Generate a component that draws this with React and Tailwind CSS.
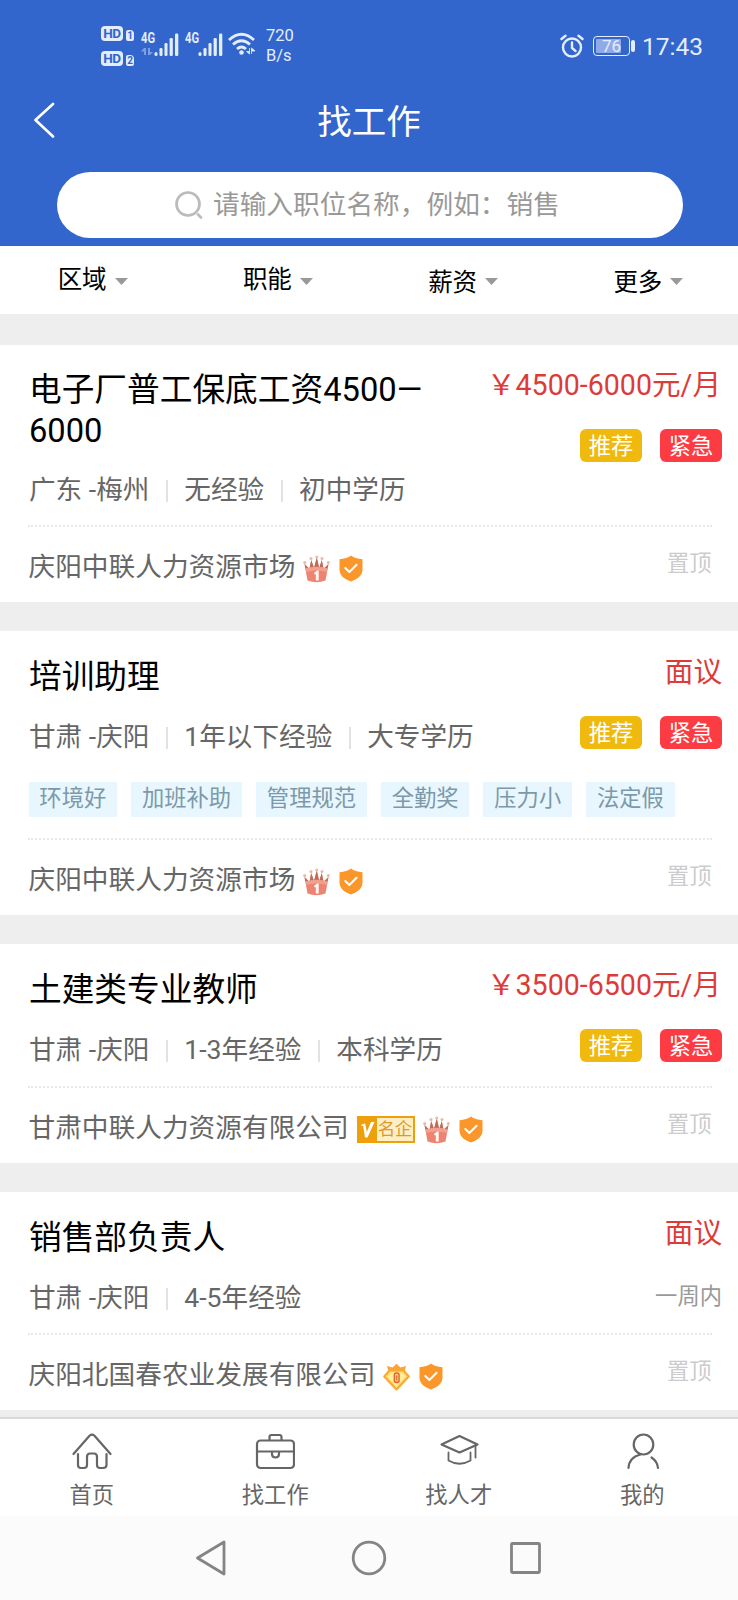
import React from "react";

const SignalBars = () => (
  <svg width="25" height="24" viewBox="0 0 25 24" fill="#e4edff">
    <rect x="0.5" y="19" width="3" height="4" rx="1.5" />
    <rect x="5.5" y="15" width="3" height="8" rx="1.2" />
    <rect x="10.5" y="10" width="3" height="13" rx="1.2" />
    <rect x="15.6" y="5" width="3.2" height="18" rx="1.2" />
    <rect x="21" y="0.5" width="3.3" height="22.5" rx="1.2" />
  </svg>
);

const NetLabel = () => (
  <span className="block w-[17px] origin-left scale-x-[0.8] text-[14px] leading-[13px] font-bold">4G</span>
);

const HdBadge = ({ n }) => (
  <div className="flex h-[15px] items-end gap-[3px]">
    <span className="flex h-[15px] w-[22px] items-center justify-center rounded-[4px] bg-[#e4edff] text-[13.5px] leading-none font-bold tracking-tight text-[#3266cc]">
      HD
    </span>
    <span className="flex h-[11px] w-[8px] items-center justify-center rounded-[2px] rounded-tr-[4px] bg-[#e4edff] text-[10px] leading-none font-bold text-[#3266cc]">
      {n}
    </span>
  </div>
);

const Crown = () => (
  <svg width="27" height="28" viewBox="0 0 27 28">
    <path d="M1.5 9 L4.5 25.5 Q13.5 28.8 22.5 25.5 L25.5 9 L20.5 14 L18.8 5 L16.2 13 L13.8 2.5 L11 13 L8.2 5 L6.5 14 Z" fill="#ee8371" />
    <path d="M1.5 9 L6.5 14 L8.2 5 L11 13 L13.8 2.5 L16.2 13 L18.8 5 L20.5 14 L25.5 9 L24.6 13.5 Q13.5 10.5 2.4 13.5 Z" fill="#c06a58" />
    <path d="M2.4 13.5 Q13.5 10 24.6 13.5 L23.9 17 Q13.5 14 3.1 17 Z" fill="#f0a08e" />
    <g fill="#e6b9ac">
      <circle cx="1.7" cy="7.5" r="1.5" />
      <circle cx="8" cy="3.6" r="1.5" />
      <circle cx="13.8" cy="2" r="1.5" />
      <circle cx="19" cy="3.6" r="1.5" />
      <circle cx="25.3" cy="7.5" r="1.5" />
    </g>
    <path d="M11.2 17.8 L14.2 15.6 H15.7 V25.5 H12.8 V19.2 H11.2 Z" fill="#fff6f2" />
  </svg>
);

const Shield = () => (
  <svg width="24" height="27" viewBox="0 0 24 27">
    <path d="M12 0.5 C14.8 2.8 18.6 3.8 23.5 4.2 V14.5 C23.5 20.5 18.5 24.3 12 26.5 C5.5 24.3 0.5 20.5 0.5 14.5 V4.2 C5.4 3.8 9.2 2.8 12 0.5 Z" fill="#fb972a" />
    <path d="M6.3 13 L10.4 17 L17.6 9.8" fill="none" stroke="#fff" strokeWidth="2" strokeLinecap="round" strokeLinejoin="round" />
  </svg>
);

const Gem = () => (
  <svg width="27" height="28" viewBox="0 0 27 28">
    <path d="M5.5 9 L4 3 L9.5 4.5 L13.5 0.8 L17.5 4.5 L23 3 L21.5 9 Z" fill="#f9a53a" />
    <path d="M6.5 7.5 H20.5 L25.8 13.5 L13.5 26.5 L1.2 13.5 Z" fill="#fddc6c" stroke="#f9a836" strokeWidth="2" strokeLinejoin="round" />
    <path d="M8 9.5 H19 L22.5 13.5 L13.5 23.5 L4.5 13.5 Z" fill="#ffef9d" />
    <rect x="11.3" y="10" width="4.8" height="9.5" rx="2" fill="#f8c86a" stroke="#e2602e" strokeWidth="1.3" />
    <path d="M13.7 12.5 V17.5" stroke="#e2602e" strokeWidth="0.9" />
  </svg>
);

const Famous = () => (
  <span className="-mr-[1px] flex h-[27px] w-[58px] border-2 border-[#eda00c] bg-[#fdeec4]">
    <span className="flex w-[18px] items-center justify-center bg-[#eda00c]">
      <svg width="14" height="18" viewBox="0 0 14 18">
        <path d="M0.5 3.5 L4.2 2.5 L5.8 11 L10 1 H13.5 L6.5 16.5 H4 L2.2 5 L0.5 5 Z" fill="#fff" />
      </svg>
    </span>
    <span className="flex flex-1 items-center justify-center text-[17.5px] leading-none tracking-[-0.5px] whitespace-nowrap text-[#dd9a2c]">名企</span>
  </span>
);

const icons = { crown: Crown, shield: Shield, gem: Gem, famous: Famous };

const jobs = [
  {
    title: "电子厂普工保底工资4500—6000",
    price: "￥4500-6000元/月",
    meta: ["广东 -梅州", "无经验", "初中学历"],
    hot: true,
    company: "庆阳中联人力资源市场",
    marks: ["crown", "shield"],
    height: "h-[257px] pt-[25px]",
    metaTop: "mt-[18px]",
  },
  {
    title: "培训助理",
    price: "面议",
    meta: ["甘肃 -庆阳", "1年以下经验", "大专学历"],
    hot: true,
    tags: ["环境好", "加班补助", "管理规范", "全勤奖", "压力小", "法定假"],
    company: "庆阳中联人力资源市场",
    marks: ["crown", "shield"],
    height: "h-[284px] pt-[26px]",
    metaTop: "mt-[19px]",
  },
  {
    title: "土建类专业教师",
    price: "￥3500-6500元/月",
    meta: ["甘肃 -庆阳", "1-3年经验", "本科学历"],
    hot: true,
    company: "甘肃中联人力资源有限公司",
    marks: ["famous", "crown", "shield"],
    height: "h-[219px] pt-[26px]",
    metaTop: "mt-[19px]",
  },
  {
    title: "销售部负责人",
    price: "面议",
    meta: ["甘肃 -庆阳", "4-5年经验"],
    time: "一周内",
    company: "庆阳北国春农业发展有限公司",
    marks: ["gem", "shield"],
    height: "h-[218px] pt-[26px]",
    metaTop: "mt-[19px]",
  },
];

function Job({ job }) {
  return (
    <article className={"flex shrink-0 flex-col bg-white " + job.height}>
      <div className="flex flex-1 justify-between pr-4 pl-[29px]">
        <div className="flex flex-col">
          <h2 className="w-[410px] text-[32.7px] leading-[41px] break-all text-black">{job.title}</h2>
          <div className={"flex h-[40px] items-center text-[26.6px] leading-[40px] whitespace-nowrap text-[#666] " + job.metaTop}>
            {job.meta.map((m, i) => (
              <React.Fragment key={m}>
                {i > 0 && <span className="mt-[2px] mr-[16px] ml-[17px] h-[22px] w-[2px] bg-[#e2e2e2]" />}
                <span>{m}</span>
              </React.Fragment>
            ))}
          </div>
          {job.tags && (
            <div className="mt-[25px] -ml-[0.5px] flex gap-[14px] whitespace-nowrap">
              {job.tags.map((t) => (
                <span key={t} className="h-[35px] bg-[#e8f6ff] px-[10.85px] text-[22.3px] leading-[33px] text-[#7c99a8]">
                  {t}
                </span>
              ))}
            </div>
          )}
        </div>
        <div className="flex w-0 flex-col items-end whitespace-nowrap">
          <div className={"-mt-[3px] h-[36px] text-[28.6px] leading-[36px] text-[#dd3b38] " + (job.price === "面议" ? "" : "mr-[1px]")}>{job.price}</div>
          {job.hot ? (
            <div className="mt-[26px] flex gap-[18px] text-[22.3px] leading-[35px] text-white">
              <span className="h-[33px] w-[62px] rounded-[6px] bg-[#f0b90d] text-center">推荐</span>
              <span className="h-[33px] w-[62px] rounded-[6px] bg-[#fc3b42] text-center">紧急</span>
            </div>
          ) : (
            <div className="mt-[29px] text-[22.3px] leading-[32px] text-[#999]">{job.time}</div>
          )}
        </div>
      </div>
      <div className="mr-[26px] ml-[28px] flex h-[77px] shrink-0 items-center justify-between border-t-2 border-dotted border-[#e8e8e8] text-[#666]">
        <div className="flex items-center pt-[4px]">
          <span className="mr-[8px] ml-[0.5px] text-[26.7px] leading-[40px]">{job.company}</span>
          <span className="mt-[4px] flex items-center gap-[9px]">
            {job.marks.map((k) => {
              const Icon = icons[k];
              return <Icon key={k} />;
            })}
          </span>
        </div>
        <span className="-mt-[3px] mr-[0.5px] text-[22.3px] leading-[32px] text-[#ccc]">置顶</span>
      </div>
    </article>
  );
}

const tabs = [
  {
    label: "首页",
    icon: (
      <>
        <path d="M1.5 21 L17.5 2.8 Q20 0.5 22.5 2.8 L38.5 21" />
        <path d="M6 21 V32 Q6 35 9 35 H12 Q15 35 15 32 V24 Q15 20.5 18 20.5 H22 Q25 20.5 25 24 V32 Q25 35 28 35 H31 Q34.5 35 34.5 32 V21" />
      </>
    ),
  },
  {
    label: "找工作",
    icon: (
      <>
        <rect x="2" y="7.5" width="37" height="27.5" rx="3.5" />
        <path d="M14.5 7 V4 Q14.5 2 16.500 2 H24.500 Q26.500 2 26.500 4 V7 M2 18.500 H39 M17 19 V21 Q17 24.500 20.500 24.500 Q24 24.500 24 21 V19" />
      </>
    ),
  },
  {
    label: "找人才",
    icon: (
      <>
        <path d="M2.5 11.5 L20.500 3 L38.500 11.500 L20.500 19.500 Z" />
        <path d="M9.500 19.500 V27.500 Q20.500 34 31.500 27.500 V19.500 M36.500 12.500 V24.500" strokeWidth="1.8" />
      </>
    ),
  },
  {
    label: "我的",
    icon: (
      <>
        <ellipse cx="21.5" cy="11.5" rx="9.8" ry="10" />
        <path d="M18.500 21.500 Q7 24.500 6.500 35 M29.500 24.500 Q35.500 28.500 36 35" />
      </>
    ),
  },
];

export default function App() {
  return (
    <div className="flex h-[1600px] w-[738px] flex-col overflow-hidden bg-[#eee] font-[Roboto,'Noto_Sans_CJK_SC',sans-serif]">
      <header className="flex h-[246px] shrink-0 flex-col bg-[#3266cc] text-white">
        <div className="flex h-[88px] justify-between pr-[35px] pl-[101px] text-[#e4edff]">
          <div className="flex pt-[26px]">
            <div className="flex flex-col gap-[10px]">
              <HdBadge n="1" />
              <HdBadge n="2" />
            </div>
            <div className="ml-[7px] flex w-[13px] flex-col pt-[6px]">
              <NetLabel />
              <svg className="mt-[3px]" width="12" height="8" viewBox="0 0 12 8" fill="#7f9fe3">
                <path d="M3 0 V7 H5 V0 Z M3 0 L0 3.5 H3 Z M7 0 H9 V7 H7 Z M9 7 L12 4 H9 Z" />
              </svg>
            </div>
            <div className="mt-[7px]"><SignalBars /></div>
            <div className="ml-[6px] w-[13px] pt-[6px]"><NetLabel /></div>
            <div className="mt-[7px]"><SignalBars /></div>
            <svg className="mt-[6px] ml-[5px]" width="28" height="24" viewBox="0 0 28 24" fill="none" stroke="#e4edff" strokeWidth="2.8">
              <path d="M1 8 Q13.5 -3.5 26 8" />
              <path d="M5 12.5 Q13.5 5 22 12.5" />
              <path d="M9 17 Q13.5 13 18 17" />
              <circle cx="13.5" cy="20.5" r="2.3" fill="#e4edff" stroke="none" />
              <path d="M21.5 16 V22 L18.5 19.5 H21.5 M23.5 22 V16 L27 19 H23.5" fill="#e4edff" strokeWidth="0.8" />
            </svg>
            <div className="ml-[10px] text-[16.5px] leading-[19.5px]">
              <div>720</div>
              <div>B/s</div>
            </div>
          </div>
          <div className="flex h-[92px] items-center">
            <svg className="-mt-[1px]" width="24" height="24" viewBox="0 0 24 24" fill="none" stroke="#e4edff" strokeWidth="2.4" strokeLinecap="round">
              <circle cx="12" cy="13.5" r="9" />
              <path d="M12 8.5 V14 L15.5 17 M1.5 5 L5.5 1.8 M22.5 5 L18.5 1.8" />
            </svg>
            <div className="ml-[9px] flex h-[20px] w-[37px] items-center rounded-[4px] border-[1.5px] border-[#e4edff] p-[2px]">
              <div className="flex h-full w-[25px] items-center rounded-[1px] bg-[#8faae6] pl-[6px] text-[17px] leading-none">76</div>
            </div>
            <div className="ml-[1px] h-[12px] w-[4px] rounded-[2px] bg-[#e4edff]" />
            <span className="mt-[2px] ml-[7px] text-[24.5px] leading-[30px]">17:43</span>
          </div>
        </div>
        <div className="grid h-[66px] grid-cols-[100px_1fr_100px] items-center">
          <svg className="-mt-[3px] ml-[33px]" width="22" height="36" viewBox="0 0 22 36" fill="none" stroke="#fff" strokeWidth="2.6" strokeLinecap="round" strokeLinejoin="round">
            <path d="M20 2 L2.5 18 L20 34.5" />
          </svg>
          <h1 className="pt-[1px] text-center text-[34.5px] leading-[48px]">找工作</h1>
        </div>
        <div className="mt-[18px] ml-[57px] flex h-[66px] w-[626px] items-center rounded-full bg-white pl-[118px] text-[26.7px] text-[#999]">
          <svg className="-mt-[1px] mr-[10px]" width="28" height="28" viewBox="0 0 28 28" fill="none" stroke="#bbb" strokeWidth="2.7" strokeLinecap="round">
            <circle cx="13" cy="13" r="11.5" />
            <path d="M23 23.5 L26 26.5" />
          </svg>
          <span className="leading-[40px]">请输入职位名称，例如：销售</span>
        </div>
      </header>

      <div className="-mr-[3px] grid h-[68px] shrink-0 grid-cols-4 bg-white text-[24.5px] leading-[68px] text-black">
        {["区域", "职能", "薪资", "更多"].map((f, i) => (
          <div key={f} className="flex h-[68px] justify-center">
            <span className={i > 1 ? "pt-[3px]" : ""}>{f}</span>
            <svg className="mt-[32px] ml-[8px]" width="13" height="7" viewBox="0 0 13 7">
              <path d="M0 0 H13 L6.5 7 Z" fill="#999" />
            </svg>
          </div>
        ))}
      </div>

      <main className="mt-[31px] flex h-[1072px] shrink-0 flex-col gap-[29px] overflow-hidden">
        {jobs.map((j) => (
          <Job key={j.title} job={j} />
        ))}
      </main>

      <nav className="flex h-[99px] shrink-0 border-t-2 border-[#d9d9d9] bg-white pr-[4px] text-[22.3px] text-[#666]">
        {tabs.map((t) => (
          <div key={t.label} className="flex flex-1 flex-col items-center pt-[14px]">
            <svg width="40" height="38" viewBox="0 0 40 38" fill="none" stroke="#666" strokeWidth="2.2" strokeLinecap="round" strokeLinejoin="round">
              {t.icon}
            </svg>
            <span className="mt-[8px] leading-[32px]">{t.label}</span>
          </div>
        ))}
      </nav>

      <footer className="flex h-[84px] shrink-0 items-center bg-[#fbfbfb] pl-[195px]">
        <svg width="347" height="36" viewBox="0 0 347 36" fill="none" stroke="#848484" strokeWidth="2.8" strokeLinejoin="round">
          <path d="M29 2 V34 L2.5 18 Z" />
          <circle cx="174" cy="18" r="15.8" />
          <rect x="316.5" y="3.5" width="28" height="29" rx="1" />
        </svg>
      </footer>
    </div>
  );
}
